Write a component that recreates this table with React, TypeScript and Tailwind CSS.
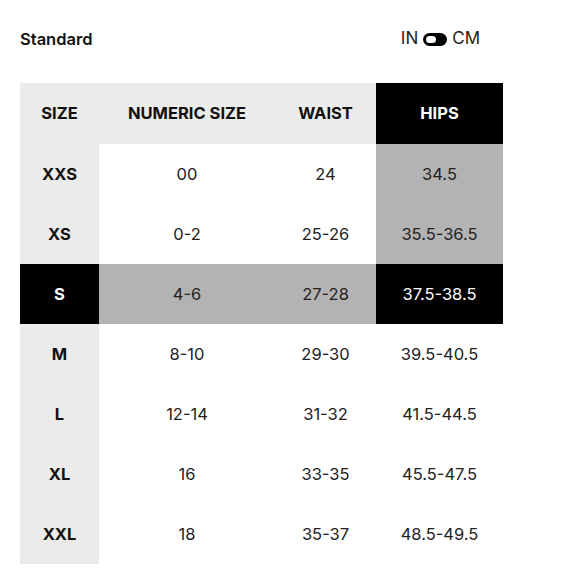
import React from 'react';

type Tone = 'light' | 'white' | 'mid' | 'dark';

const rows = [
  { size: 'XXS', numeric: '00', waist: '24', hips: '34.5' },
  { size: 'XS', numeric: '0-2', waist: '25-26', hips: '35.5-36.5' },
  { size: 'S', numeric: '4-6', waist: '27-28', hips: '37.5-38.5' },
  { size: 'M', numeric: '8-10', waist: '29-30', hips: '39.5-40.5' },
  { size: 'L', numeric: '12-14', waist: '31-32', hips: '41.5-44.5' },
  { size: 'XL', numeric: '16', waist: '33-35', hips: '45.5-47.5' },
  { size: 'XXL', numeric: '18', waist: '35-37', hips: '48.5-49.5' },
];

const toneClass: Record<Tone, string> = {
  light: 'bg-[#ebebe9] text-[#111]',
  white: 'bg-white text-[#222]',
  mid: 'bg-[#b3b3b3] text-[#222]',
  dark: 'bg-black text-white',
};

function Cell({ tone, bold, children }: { tone: Tone; bold?: boolean; children: React.ReactNode }) {
  return (
    <div className={`flex items-center justify-center h-[60px] text-[16.5px] ${bold ? 'font-bold' : 'font-normal'} ${toneClass[tone]}`}>
      {children}
    </div>
  );
}

export default function App() {
  const selected = 'S';
  const highlightCol = 'hips';

  return (
    <div className="w-[580px] h-[580px] bg-white px-5" style={{ fontFamily: 'Inter, "Noto Sans", sans-serif' }}>
      <div className="w-[483px] h-[78px] flex items-center justify-between">
        <span className="text-[16.5px] font-semibold text-[#111]">Standard</span>
        <div className="flex items-center gap-[5px] pr-[23px] text-[17px] text-[#222]">
          <span>IN</span>
          <span className="relative w-[24px] h-[13px] rounded-full bg-black">
            <span className="absolute left-[3px] top-[3px] w-[10px] h-[7px] rounded-full bg-white" />
          </span>
          <span>CM</span>
        </div>
      </div>

      <div className="mt-[5px] w-[483px] grid grid-cols-[79px_176px_101px_127px]">
        <div className="h-[61px] flex items-center justify-center bg-[#ebebe9] text-[16.5px] font-bold text-[#111]">SIZE</div>
        <div className="h-[61px] flex items-center justify-center bg-[#ebebe9] text-[16.5px] font-bold text-[#111]">NUMERIC SIZE</div>
        <div className="h-[61px] flex items-center justify-center bg-[#ebebe9] text-[16.5px] font-bold text-[#111]">WAIST</div>
        <div className="h-[61px] flex items-center justify-center bg-black text-[16.5px] font-bold text-white">HIPS</div>

        {rows.map((r, i) => {
          const isSel = r.size === selected;
          const above = i < rows.findIndex((x) => x.size === selected);
          const mid: Tone = isSel ? 'mid' : 'white';
          const hips: Tone = isSel ? 'dark' : above && highlightCol === 'hips' ? 'mid' : 'white';
          return (
            <React.Fragment key={r.size}>
              <Cell tone={isSel ? 'dark' : 'light'} bold>{r.size}</Cell>
              <Cell tone={mid}>{r.numeric}</Cell>
              <Cell tone={mid}>{r.waist}</Cell>
              <Cell tone={hips}>{r.hips}</Cell>
            </React.Fragment>
          );
        })}
      </div>
    </div>
  );
}
